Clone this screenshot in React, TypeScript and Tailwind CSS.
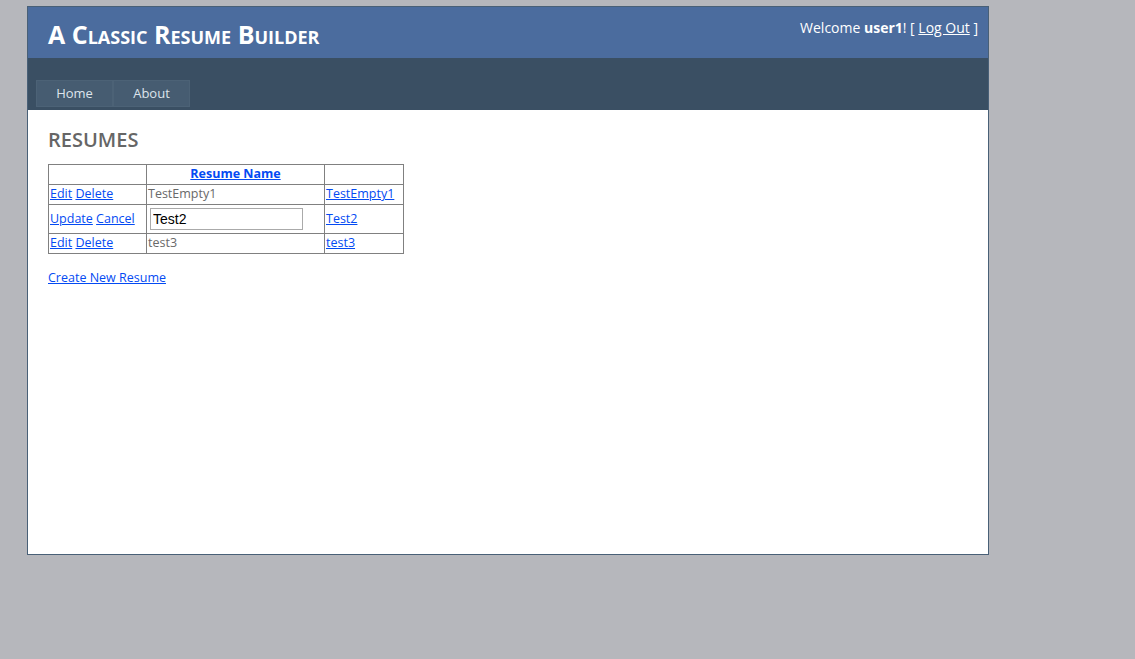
import React from "react";

const font = { fontFamily: '"Open Sans", "DejaVu Sans", sans-serif' };

type Row = { name: string; editing?: boolean };

const rows: Row[] = [
  { name: "TestEmpty1" },
  { name: "Test2", editing: true },
  { name: "test3" },
];

function Link({ children, className = "" }: { children: React.ReactNode; className?: string }) {
  return <a href="#" className={`text-[#034af3] underline ${className}`}>{children}</a>;
}

export default function App() {
  return (
    <div className="min-h-[659px] bg-[#b6b7bc] pt-[6px] text-[12.5px] text-[#696969]" style={font}>
      <div className="ml-[27px] w-[962px] border border-[#496077] bg-white">
        {/* header */}
        <div className="flex h-[51px] items-start justify-between bg-[#4b6c9e] pl-[20px] pr-[10px]">
          <h1 className="mt-[15px] text-[25px] font-bold leading-none text-white [font-variant:small-caps]">
            A Classic Resume Builder
          </h1>
          <div className="mt-[10px] text-[14px] text-white">
            Welcome <b>user1</b>! [ <a href="#" className="underline">Log Out</a> ]
          </div>
        </div>

        {/* menu */}
        <div className="flex h-[52px] items-end bg-[#3a4f63] pb-[3px] pl-[8px]">
          {["Home", "About"].map((m) => (
            <a
              key={m}
              href="#"
              className="flex h-[27px] w-[77px] items-center justify-center border border-[#4c6276] bg-[#465c71] text-[13px] text-[#dde4ec]"
            >
              {m}
            </a>
          ))}
        </div>

        {/* main */}
        <div className="h-[444px] px-[20px] pt-[20px]">
          <h2 className="text-[20px] font-semibold leading-none text-[#666666]">RESUMES</h2>

          <table className="mt-[14px] border-collapse text-[12.5px]">
            <thead>
              <tr className="h-[20px]">
                <th className="w-[98px] border border-[#808080]" />
                <th className="w-[178px] border border-[#808080] font-bold">
                  <Link>Resume Name</Link>
                </th>
                <th className="w-[79px] border border-[#808080]" />
              </tr>
            </thead>
            <tbody>
              {rows.map((r) => (
                <tr key={r.name} className={r.editing ? "h-[29px]" : "h-[20px]"}>
                  <td className="border border-[#808080] px-[1px]">
                    {r.editing ? (
                      <>
                        <Link>Update</Link> <Link>Cancel</Link>
                      </>
                    ) : (
                      <>
                        <Link>Edit</Link> <Link>Delete</Link>
                      </>
                    )}
                  </td>
                  <td className="border border-[#808080] px-[1px]">
                    {r.editing ? (
                      <input
                        defaultValue={r.name}
                        className="ml-[2px] h-[22px] w-[153px] border border-[#aaaaaa] px-[2px] text-[14px] text-black"
                        style={{ fontFamily: '"Liberation Sans", Arial, sans-serif' }}
                      />
                    ) : (
                      r.name
                    )}
                  </td>
                  <td className="border border-[#808080] px-[1px]">
                    <Link>{r.name}</Link>
                  </td>
                </tr>
              ))}
            </tbody>
          </table>

          <div className="mt-[15px]">
            <Link>Create New Resume</Link>
          </div>
        </div>
      </div>
    </div>
  );
}
